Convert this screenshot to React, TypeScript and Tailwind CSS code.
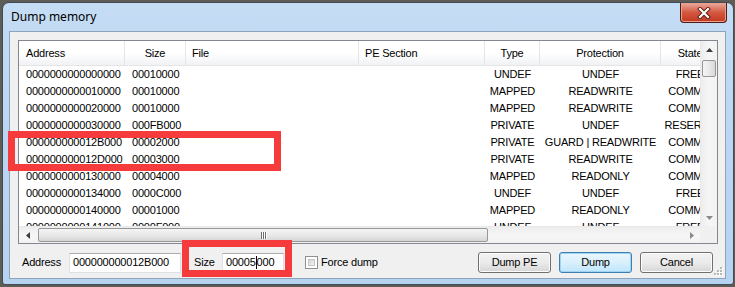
import React from "react";

const rows = [
  ["0000000000000000", "00010000", "UNDEF", "UNDEF", "FREE"],
  ["0000000000010000", "00010000", "MAPPED", "READWRITE", "COMMIT"],
  ["0000000000020000", "00010000", "MAPPED", "READWRITE", "COMMIT"],
  ["0000000000030000", "000FB000", "PRIVATE", "UNDEF", "RESERVE"],
  ["000000000012B000", "00002000", "PRIVATE", "GUARD | READWRITE", "COMMIT"],
  ["000000000012D000", "00003000", "PRIVATE", "READWRITE", "COMMIT"],
  ["0000000000130000", "00004000", "MAPPED", "READONLY", "COMMIT"],
  ["0000000000134000", "0000C000", "UNDEF", "UNDEF", "FREE"],
  ["0000000000140000", "00001000", "MAPPED", "READONLY", "COMMIT"],
  ["0000000000141000", "0000F000", "UNDEF", "UNDEF", "FREE"],
];

function Arrow({ dir }: { dir: "up" | "down" | "left" | "right" }) {
  const pts = {
    up: "0,4 3.5,0 7,4",
    down: "0,0 3.5,4 7,0",
    left: "4,0 0,3.5 4,7",
    right: "0,0 4,3.5 0,7",
  }[dir];
  const vertical = dir === "up" || dir === "down";
  return (
    <svg width={vertical ? 7 : 4} height={vertical ? 4 : 7} viewBox={vertical ? "0 0 7 4" : "0 0 4 7"}>
      <polygon points={pts} fill={dir === "up" || dir === "left" ? "#3d3d3d" : "#8a8a8a"} />
    </svg>
  );
}

function Button({ label, primary }: { label: string; primary?: boolean }) {
  return (
    <div
      className={
        primary
          ? "w-[73px] h-[21px] flex items-center justify-center rounded-[3px] border border-[#3c7fb1] bg-gradient-to-b from-[#eaf6fd] via-[#d9f0fc] to-[#bee6fd] shadow-[inset_0_0_0_1px_#9fd5f3]"
          : "w-[73px] h-[21px] flex items-center justify-center rounded-[3px] border border-[#707070] bg-gradient-to-b from-[#f2f2f2] via-[#ebebeb] to-[#d6d6d6] shadow-[inset_0_0_0_1px_#fcfcfc]"
      }
    >
      {label}
    </div>
  );
}

export default function App() {
  return (
    <div className="relative w-[735px] h-[287px] overflow-hidden bg-[#5d5c55] font-['Liberation_Sans',sans-serif] text-[11px] text-black tracking-[-0.2px]">
      {/* dialog window */}
      <div className="ml-[2px] mt-[2px] w-[732px] h-[283px] border border-[#3f4b59] rounded-t-[7px] rounded-b-[3px] bg-gradient-to-b from-[#c4dcf4] via-[#bad6f2] to-[#b6d3f0] flex flex-col pl-[6px] pr-[7px] pb-[5px]">
        {/* title bar */}
        <div className="h-[28px] flex items-start justify-between">
          <span className="ml-[2px] mt-[6px] font-['Noto_Sans',sans-serif] text-[12px] leading-[16px] tracking-normal">
            Dump memory
          </span>
          <div className="-mr-[1px] w-[47px] h-[20px] rounded-b-[4px] border border-[#4f1b13] border-t-0 bg-gradient-to-b from-[#e9a99d] via-[#d3573f] to-[#c2391f] shadow-[inset_0_0_0_1px_#eea08e] flex items-center justify-center">
            <svg width="14" height="12" viewBox="0 0 14 12">
              <path d="M3 2 L11 10 M11 2 L3 10" stroke="#5a1a10" strokeWidth="4" strokeLinecap="square" />
              <path d="M3 2 L11 10 M11 2 L3 10" stroke="#ffffff" strokeWidth="2.2" strokeLinecap="square" />
            </svg>
          </div>
        </div>

        {/* client area */}
        <div className="relative h-[248px] border border-[#8ea4bb] bg-[#f0f0f0] px-[8px] pt-[8px]">
          {/* list view */}
          <div className="w-[700px] h-[204px] border border-[#828790] bg-white flex flex-col">
            <div className="flex h-[185px]">
              <div className="w-[681px] overflow-hidden">
                {/* header */}
                <div className="flex h-[25px] items-center border-b border-[#e5e5e5] bg-gradient-to-b from-white via-white to-[#f1f2f4] whitespace-nowrap">
                  <div className="w-[106px] shrink-0 h-full flex items-center pl-[7px] border-r border-[#e3e5e8]">Address</div>
                  <div className="w-[61px] shrink-0 h-full flex items-center justify-center border-r border-[#e3e5e8]">Size</div>
                  <div className="w-[173px] shrink-0 h-full flex items-center pl-[6px] border-r border-[#e3e5e8]">File</div>
                  <div className="w-[126px] shrink-0 h-full flex items-center pl-[6px] border-r border-[#e3e5e8]">PE Section</div>
                  <div className="w-[55px] shrink-0 h-full flex items-center justify-center border-r border-[#e3e5e8]">Type</div>
                  <div className="w-[121px] shrink-0 h-full flex items-center justify-center border-r border-[#e3e5e8]">Protection</div>
                  <div className="w-[58px] shrink-0 h-full flex items-center justify-center">State</div>
                </div>
                {/* rows */}
                {rows.map((r, i) => (
                  <div key={i} className="flex h-[17px] items-center whitespace-nowrap">
                    <div className="w-[106px] shrink-0 pl-[7px]">{r[0]}</div>
                    <div className="w-[61px] shrink-0 pl-[7px]">{r[1]}</div>
                    <div className="w-[173px] shrink-0"></div>
                    <div className="w-[126px] shrink-0"></div>
                    <div className="w-[55px] shrink-0 flex justify-center">{r[2]}</div>
                    <div className="w-[121px] shrink-0 flex justify-center">{r[3]}</div>
                    <div className="w-[58px] shrink-0 flex justify-center">{r[4]}</div>
                  </div>
                ))}
              </div>
              {/* vertical scrollbar */}
              <div className="w-[17px] flex flex-col bg-gradient-to-r from-[#ededed] via-[#f6f6f6] to-[#f2f2f2] border-l border-[#e9e9e9]">
                <div className="h-[17px] flex items-center justify-center">
                  <Arrow dir="up" />
                </div>
                <div className="flex-1 pt-[2px]">
                  <div className="mx-[1px] h-[17px] rounded-[2px] border border-[#979797] bg-gradient-to-r from-[#f4f4f4] via-[#e9e9e9] to-[#d9d9d9]"></div>
                </div>
                <div className="h-[17px] flex items-center justify-center">
                  <Arrow dir="down" />
                </div>
              </div>
            </div>
            {/* horizontal scrollbar */}
            <div className="flex h-[17px]">
              <div className="w-[681px] flex bg-gradient-to-b from-[#ededed] via-[#f6f6f6] to-[#f2f2f2] border-t border-[#e9e9e9]">
                <div className="w-[17px] flex items-center justify-center">
                  <Arrow dir="left" />
                </div>
                <div className="w-[450px] ml-[2px] my-[1px] rounded-[2px] border border-[#979797] bg-gradient-to-b from-[#f4f4f4] via-[#e9e9e9] to-[#d6d6d6] flex items-center justify-center">
                  <div className="flex gap-[1px]">
                    <div className="w-[1px] h-[7px] bg-[#6e6e6e] shadow-[1px_0_0_#ffffff]"></div>
                    <div className="w-[1px] h-[7px] bg-[#6e6e6e] shadow-[1px_0_0_#ffffff]"></div>
                    <div className="w-[1px] h-[7px] bg-[#6e6e6e] shadow-[1px_0_0_#ffffff]"></div>
                  </div>
                </div>
                <div className="flex-1"></div>
                <div className="w-[17px] flex items-center justify-center">
                  <Arrow dir="right" />
                </div>
              </div>
              <div className="w-[17px] bg-[#f0f0f0]"></div>
            </div>
          </div>

          {/* bottom controls */}
          <div className="mt-[8px] h-[21px] flex items-center">
            <span className="ml-[4px] w-[47px]">Address</span>
            <div className="w-[112px] h-[20px] border border-[#dbdfe6] border-t-[#abadb3] bg-white flex items-center pl-[3px]">
              000000000012B000
            </div>
            <span className="ml-[13px] w-[28px]">Size</span>
            <div className="w-[62px] h-[20px] border border-[#dbdfe6] border-t-[#abadb3] bg-white flex items-center pl-[3px]">
              00005
              <span className="w-[1px] h-[13px] bg-black"></span>
              000
            </div>
            <div className="ml-[21px] w-[13px] h-[13px] border border-[#8f8f8f] bg-white p-[2px]">
              <div className="w-full h-full bg-gradient-to-br from-[#d4d4d4] to-[#f4f4f4] border border-[#c4c4c4]"></div>
            </div>
            <span className="ml-[3px]">Force dump</span>
            <div className="ml-auto mr-[4px] flex gap-[8px]">
              <Button label="Dump PE" />
              <Button label="Dump" primary />
              <Button label="Cancel" />
            </div>
          </div>

          {/* resize grip */}
          <svg className="absolute right-[2px] bottom-[2px]" width="10" height="10" viewBox="0 0 10 10">
            {[
              [7, 1],
              [4, 4],
              [7, 4],
              [1, 7],
              [4, 7],
              [7, 7],
            ].map(([x, y], i) => (
              <g key={i}>
                <rect x={x + 1} y={y + 1} width="2" height="2" fill="#ffffff" />
                <rect x={x} y={y} width="2" height="2" fill="#b8b8b8" />
              </g>
            ))}
          </svg>
        </div>
      </div>

      {/* red annotation boxes */}
      <div className="absolute left-[8px] top-[131px] w-[273px] h-[40px] border-[7px] border-[#f53b3b]"></div>
      <div className="absolute left-[182px] top-[240px] w-[110px] h-[37px] border-[7px] border-[#f53b3b]"></div>
    </div>
  );
}
